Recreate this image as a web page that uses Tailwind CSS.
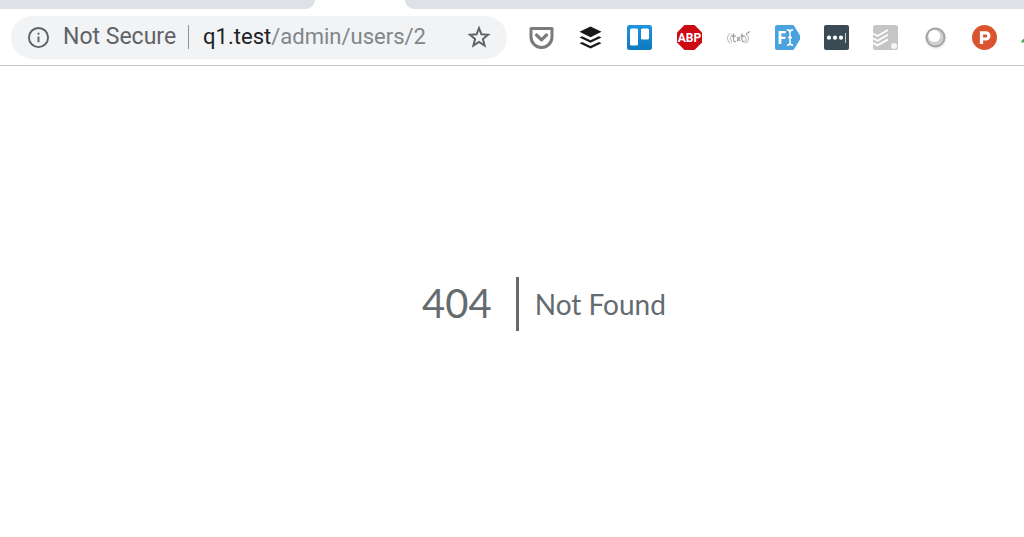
<!DOCTYPE html>
<html lang="en">
<head>
    <meta charset="UTF-8">
    <meta name="viewport" content="width=device-width, initial-scale=1.0">
    <title>Not Found</title>
    <script src="https://cdn.jsdelivr.net/npm/@tailwindcss/browser@4"></script>
</head>
<body class="min-h-screen flex flex-col overflow-x-hidden bg-white font-['Roboto',sans-serif]">

<!-- TAB STRIP -->
<div class="flex h-[9px] gap-[90px]">
    <div class="w-[315px] bg-[#dee1e6] rounded-br-[9px]"></div>
    <div class="flex-1 bg-[#dee1e6] rounded-bl-[9px]"></div>
</div>

<!-- TOOLBAR -->
<header class="flex items-center h-[57px] pl-[11px] gap-[22px] border-b border-[#c8c9ca] overflow-hidden">
    <form class="flex-1 min-w-0 flex items-center h-[43px] px-4 rounded-full bg-[#f1f3f4] text-[22px] leading-7">
        <button type="button" class="flex items-center gap-[13px] shrink-0 text-[#5f6368]" aria-label="Site information">
            <svg class="size-[23px]" viewBox="0 0 24 24" fill="none" stroke="currentColor" stroke-width="2">
                <circle cx="12" cy="12" r="10"/>
                <path d="M12 11v6M12 7v2.2"/>
            </svg>
            <span class="text-[23px] leading-7">Not Secure</span>
        </button>
        <span class="w-px h-6 ml-3 mr-3.5 bg-[#8f9397]"></span>
        <a href="#" class="flex-1 whitespace-nowrap text-[#80868b]"><span class="text-[#202124]">q1.test</span>/admin/users/2</a>
        <button type="button" class="shrink-0 text-[#5f6368]" aria-label="Bookmark this page">
            <svg class="size-6" viewBox="0 0 24 24" fill="none" stroke="currentColor" stroke-width="2">
                <path d="M12 3.200l2.400 6.100 6.600.5-5.100 4.200 1.700 6.500L12 16.900l-5.600 3.600 1.700-6.500L3 9.800l6.600-.5z"/>
            </svg>
        </button>
    </form>

    <div class="w-[495px] shrink-0 flex items-center justify-between">
        <button type="button" aria-label="Pocket">
            <svg class="size-[25px]" viewBox="0 0 25 25" fill="none">
                <path d="M2 3.500h21v8.500a10.500 10.500 0 0 1-21 0z" stroke="#7b7b7b" stroke-width="3" stroke-linejoin="round"/>
                <path d="M7.500 10l5 4.800 5-4.800" stroke="#7b7b7b" stroke-width="3.200" stroke-linecap="round" stroke-linejoin="round"/>
            </svg>
        </button>
        <button type="button" aria-label="Buffer">
            <svg class="size-[25px]" viewBox="0 0 25 25" fill="#17191c">
                <path d="M12.500 1.500l11 5.300-11 5.400-11-5.400z"/>
                <path d="M1.500 12.500l2.600-1.300 8.400 4 8.400-4 2.600 1.300-11 5.300z"/>
                <path d="M1.500 18.200l2.600-1.300 8.400 4 8.400-4 2.600 1.300-11 5.300z"/>
            </svg>
        </button>
        <button type="button" aria-label="Trello">
            <svg class="size-[25px]" viewBox="0 0 25 25">
                <defs>
                    <linearGradient id="trello" x1="0" y1="0" x2="0" y2="1">
                        <stop offset="0" stop-color="#1d96e0"/>
                        <stop offset="1" stop-color="#0f78bd"/>
                    </linearGradient>
                </defs>
                <rect width="25" height="25" rx="2.500" fill="url(#trello)"/>
                <rect x="3" y="3.500" width="8" height="17" rx="1.500" fill="#fff"/>
                <rect x="14" y="3.500" width="8" height="11" rx="1.500" fill="#fff"/>
            </svg>
        </button>
        <button type="button" aria-label="Adblock Plus">
            <svg class="size-[25px]" viewBox="0 0 25 25">
                <path d="M7.500 0h10L25 7.500v10L17.500 25h-10L0 17.500v-10z" fill="#cb0a14"/>
                <text x="12.500" y="16.700" text-anchor="middle" fill="#fff" font-family="Roboto, sans-serif" font-size="12" font-weight="700">ABP</text>
            </svg>
        </button>
        <button type="button" aria-label="Text shortcuts">
            <svg class="size-[25px]" viewBox="0 0 25 25" fill="none" stroke="#b5b5b5">
                <path d="M4 8Q-1 13 4 18.500M5.800 9.500q-3 4 0 8M20 9q5 4.500 0 9.500M18.800 10.500q3 3.500 0 7"/>
                <path d="M7.500 8.500v6.500q.3 2 2.500 1.500M5.800 11h4M16 8.500v6.500q.3 2 2.500 1.500M14.500 11h4" stroke="#a3a3a3" stroke-width="1.300"/>
                <path d="M11 12l3 4M14 12l-3 4M20 9l4-2.500" stroke="#a3a3a3" stroke-width="1.300"/>
            </svg>
        </button>
        <button type="button" aria-label="Form filler">
            <svg class="size-[25px]" viewBox="0 0 25 25">
                <path d="M2 0h16.500L25 10.500v4L18.500 25H2a2 2 0 0 1-2-2V2a2 2 0 0 1 2-2z" fill="#4aa3df"/>
                <text x="2" y="18.500" fill="#fff" font-family="Open Sans, sans-serif" font-size="17" font-weight="700">F</text>
                <path d="M11.800 4.800q3.200 0 3.200 2.500v10.400q0 2.500-3.200 2.500M18.200 4.800q-3.200 0-3.200 2.500v10.400q0 2.500 3.200 2.500M13 12.500h4" fill="none" stroke="#fff" stroke-width="1.500"/>
            </svg>
        </button>
        <button type="button" aria-label="Password manager">
            <svg class="size-[25px]" viewBox="0 0 25 25">
                <rect width="25" height="25" rx="2" fill="#3b4b55"/>
                <g fill="#fff">
                    <circle cx="5" cy="12.700" r="2.100"/>
                    <circle cx="11" cy="12.700" r="2.100"/>
                    <circle cx="17" cy="12.700" r="2.100"/>
                    <rect x="21" y="8" width="1" height="10" fill="#c5cacd"/>
                </g>
            </svg>
        </button>
        <button type="button" aria-label="Todoist">
            <svg class="size-[25px]" viewBox="0 0 25 25">
                <rect width="25" height="25" rx="2.500" fill="#c5c5c5"/>
                <path d="M0 8.500l4.500 2.500L15 5M0 13.200l4.500 2.500L15 9.700M0 17.900l4.500 2.500L15 14.400" fill="none" stroke="#fff" stroke-width="1.800"/>
                <circle cx="21" cy="21" r="3" fill="#f7f7f7"/>
            </svg>
        </button>
        <button type="button" aria-label="Momentum">
            <svg class="size-[25px]" viewBox="0 0 25 25">
                <circle cx="12.500" cy="13.500" r="11" fill="#f5f5f5"/>
                <circle cx="12.500" cy="12.500" r="10" fill="#a3a3a3"/>
                <circle cx="12.500" cy="12.500" r="8" fill="#cfcfcf"/>
                <circle cx="11.300" cy="11" r="6" fill="#fff"/>
            </svg>
        </button>
        <button type="button" aria-label="Product Hunt">
            <svg class="size-[25px]" viewBox="0 0 25 25">
                <circle cx="12.500" cy="12.500" r="12.500" fill="#da552f"/>
                <path d="M9.500 19V7.800h4.300a3 3 0 0 1 0 6.200H9.500" fill="none" stroke="#fff" stroke-width="3.200"/>
            </svg>
        </button>
        <button type="button" class="w-[3px] overflow-hidden" aria-label="More extensions">
            <svg class="w-[25px] h-[25px] max-w-none" viewBox="0 0 25 25">
                <path d="M0 17.500q1-4 6-5v5z" fill="#3fa85a"/>
            </svg>
        </button>
    </div>
</header>

<!-- PAGE -->
<main class="flex-1 flex items-center justify-center pl-16 pt-1 font-['Lato',sans-serif] text-[#636b6f]">
    <h1 class="pr-6 text-[40px] leading-[52px] pb-0.5 border-r-3 border-[#636b6f]">404</h1>
    <p class="pl-4 text-[28px] leading-[54px]">Not Found</p>
</main>

</body>
</html>
